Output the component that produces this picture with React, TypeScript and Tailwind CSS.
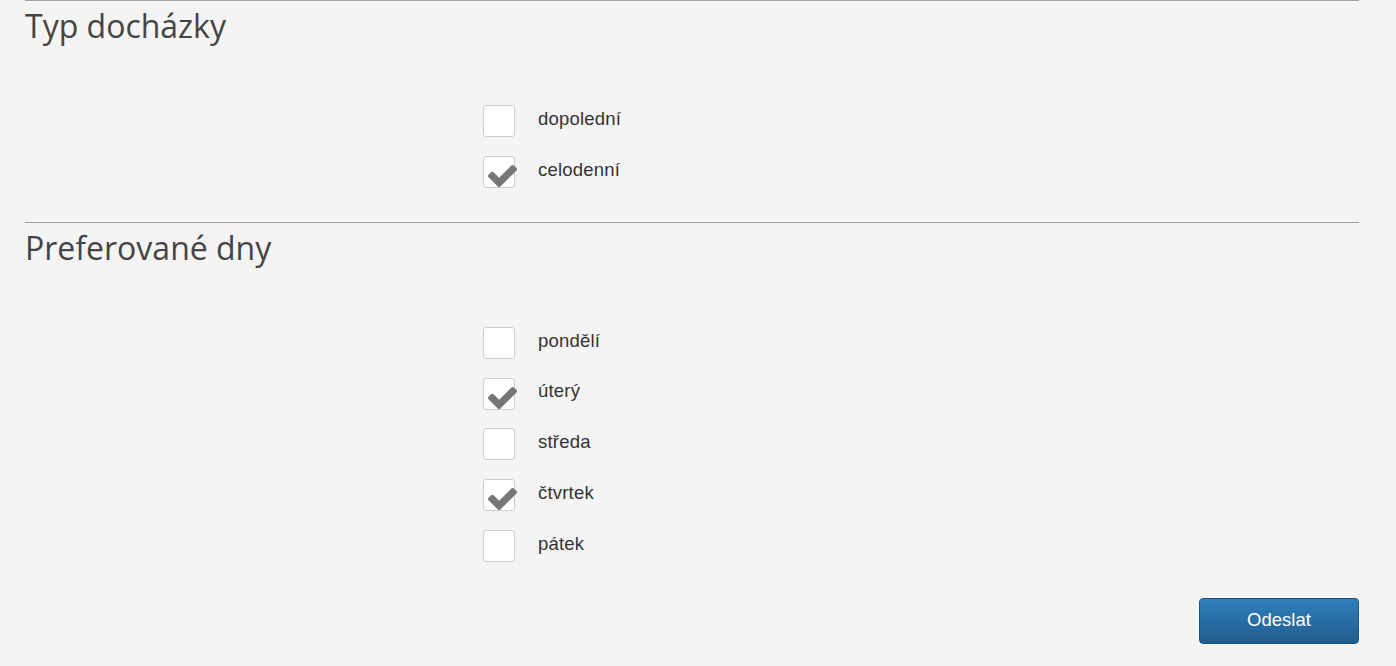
import React from "react";

function Check() {
  return (
    <svg
      viewBox="121 334 1550 1188"
      className="absolute left-[4px] top-[8px] w-[29px] h-[22px]"
      preserveAspectRatio="none"
    >
      <path
        fill="#777777"
        d="M1671 566q0 40-28 68l-724 724-136 136q-28 28-68 28t-68-28l-136-136-362-362q-28-28-28-68t28-68l136-136q28-28 68-28t68 28l294 295 656-657q28-28 68-28t68 28l136 136q28 28 28 68z"
      />
    </svg>
  );
}

function Row({ label, checked }: { label: string; checked?: boolean }) {
  return (
    <div className="flex items-center h-[32px]">
      <div className="relative w-[32px] h-[32px] bg-white border border-[#cccccc] rounded-[3px] shrink-0">
        {checked && <Check />}
      </div>
      <span className="ml-[23px] pb-[4px] text-[18.5px] tracking-[0.2px] text-[#333333] leading-none font-['Liberation_Sans',Arial,sans-serif]">
        {label}
      </span>
    </div>
  );
}

function Section({
  title,
  items,
  pb,
}: {
  title: string;
  items: { label: string; checked?: boolean }[];
  pb: string;
}) {
  return (
    <section className={`border-t border-[#a0a0a0] ${pb}`}>
      <h2 className="mt-[7px] text-[32px] leading-[36px] text-[#444444] font-['Open_Sans',sans-serif] font-normal">
        {title}
      </h2>
      <div className="mt-[61px] ml-[458px] flex flex-col gap-[18.75px]">
        {items.map((it) => (
          <Row key={it.label} label={it.label} checked={it.checked} />
        ))}
      </div>
    </section>
  );
}

export default function App() {
  return (
    <div className="min-h-[666px] bg-[#f4f4f4]">
      <div className="ml-[25px] w-[1334px]">
        <Section
          title="Typ docházky"
          pb="pb-[34px]"
          items={[
            { label: "dopolední" },
            { label: "celodenní", checked: true },
          ]}
        />
        <Section
          title="Preferované dny"
          pb="pb-[36px]"
          items={[
            { label: "pondělí" },
            { label: "úterý", checked: true },
            { label: "středa" },
            { label: "čtvrtek", checked: true },
            { label: "pátek" },
          ]}
        />
        <div className="flex justify-end">
          <button className="w-[160px] h-[46px] pb-[2px] rounded-[4px] border border-[#1f5482] bg-gradient-to-b from-[#2f7fbc] to-[#225c8e] text-white text-[18.5px] font-['Liberation_Sans',Arial,sans-serif]">
            Odeslat
          </button>
        </div>
      </div>
    </div>
  );
}
